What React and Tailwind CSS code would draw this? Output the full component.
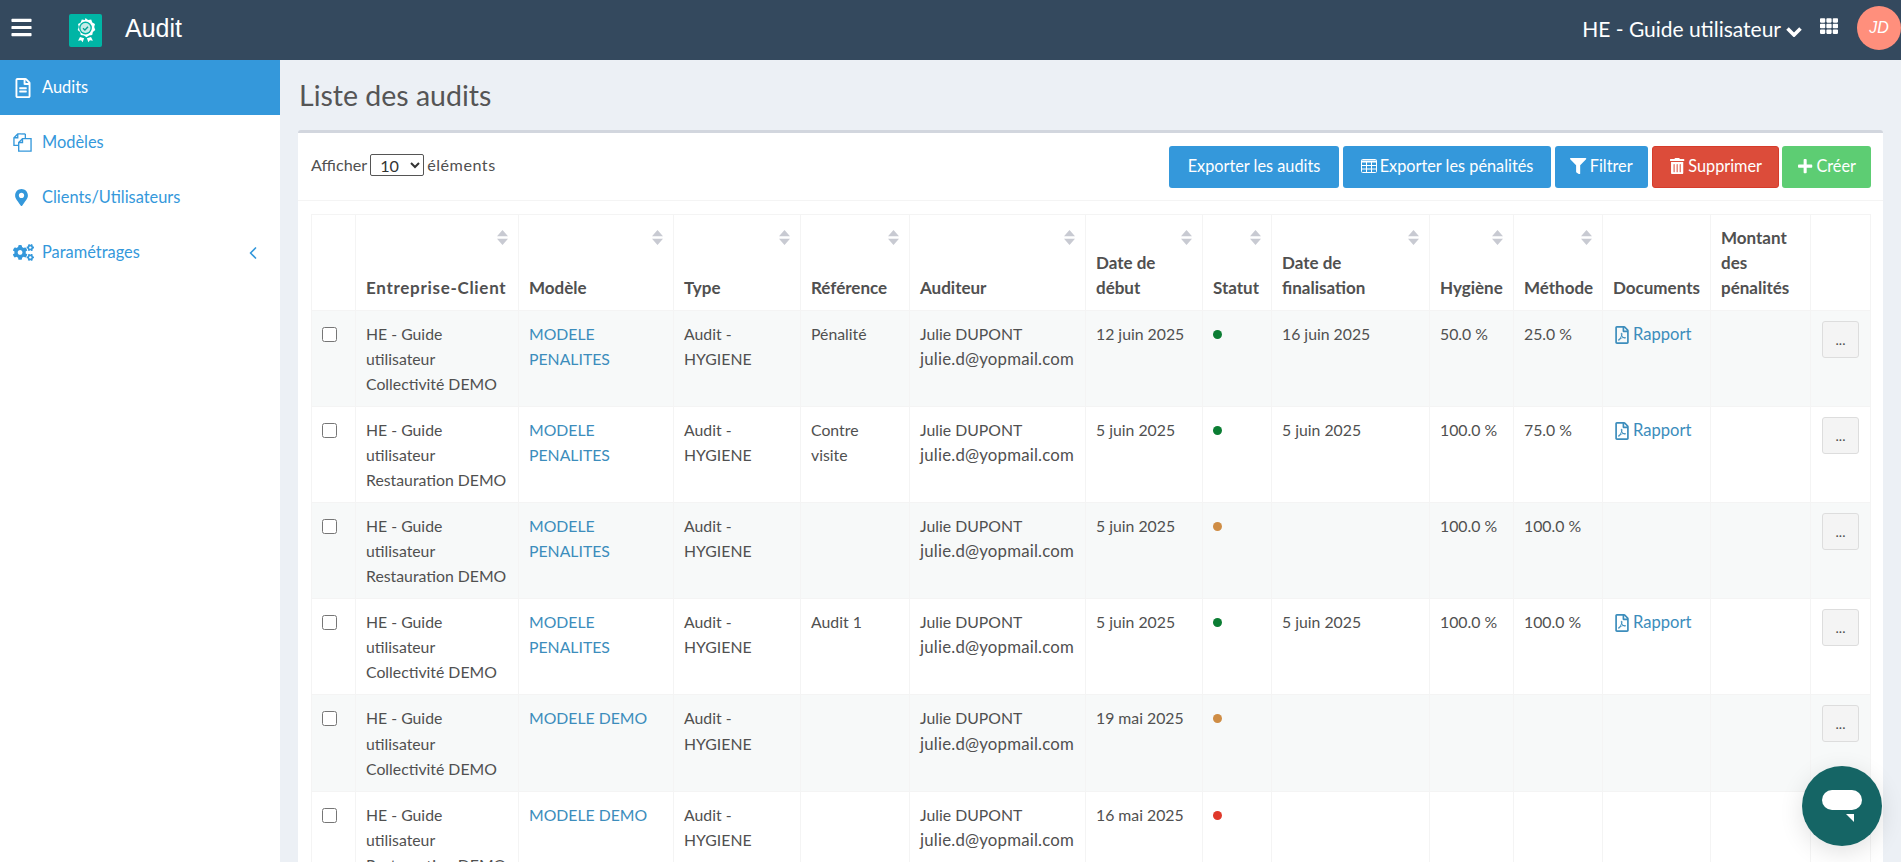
import React from 'react';
import { FaBars, FaRegFileAlt, FaMapMarkerAlt, FaCogs, FaTh, FaFilter, FaTrashAlt, FaPlus, FaRegFilePdf } from 'react-icons/fa';
import { ChevronLeft } from 'lucide-react';

const columns = [
  { w: 'w-[44px]', label: '' },
  { w: 'w-[163px] tracking-[0.7px]', label: 'Entreprise-Client', sort: true },
  { w: 'w-[155px]', label: 'Modèle', sort: true },
  { w: 'w-[127px]', label: 'Type', sort: true },
  { w: 'w-[109px]', label: 'Référence', sort: true },
  { w: 'w-[176px]', label: 'Auditeur', sort: true },
  { w: 'w-[117px]', label: 'Date de début', sort: true },
  { w: 'w-[69px]', label: 'Statut', sort: true },
  { w: 'w-[158px]', label: 'Date de finalisation', sort: true },
  { w: 'w-[84px]', label: 'Hygiène', sort: true },
  { w: 'w-[89px]', label: 'Méthode', sort: true },
  { w: 'w-[108px]', label: 'Documents' },
  { w: 'w-[100px]', label: 'Montant des pénalités' },
  { w: 'w-[60px]', label: '' },
];

const audits = [
  { client: 'Collectivité DEMO', modele: 'MODELE PENALITES', ref: 'Pénalité', debut: '12 juin 2025', statut: 'bg-[#0b7d33]', fin: '16 juin 2025', hyg: '50.0 %', met: '25.0 %', doc: true },
  { client: 'Restauration DEMO', modele: 'MODELE PENALITES', ref: <>Contre<br />visite</>, debut: '5 juin 2025', statut: 'bg-[#0b7d33]', fin: '5 juin 2025', hyg: '100.0 %', met: '75.0 %', doc: true },
  { client: 'Restauration DEMO', modele: 'MODELE PENALITES', ref: '', debut: '5 juin 2025', statut: 'bg-[#cf8d45]', fin: '', hyg: '100.0 %', met: '100.0 %', doc: false },
  { client: 'Collectivité DEMO', modele: 'MODELE PENALITES', ref: 'Audit 1', debut: '5 juin 2025', statut: 'bg-[#0b7d33]', fin: '5 juin 2025', hyg: '100.0 %', met: '100.0 %', doc: true },
  { client: 'Collectivité DEMO', modele: 'MODELE DEMO', ref: '', debut: '19 mai 2025', statut: 'bg-[#cf8d45]', fin: '', hyg: '', met: '', doc: false },
  { client: 'Restauration DEMO', modele: 'MODELE DEMO', ref: '', debut: '16 mai 2025', statut: 'bg-[#e0392b]', fin: '', hyg: '', met: '', doc: false },
];

const AuditLogo = () => (
  <svg viewBox="0 0 33 33" className="w-[33px] h-[33px]">
    <rect width="33" height="33" rx="2" fill="#00b5a5" />
    <path d="M16.5 4l2.6 1.9 3.1-.3 1.1 2.9 2.7 1.6-.8 3 1.1 2.9-2.4 2.1-.7 3-3.1.3-2.6 1.9-2.6-1.9-3.1-.3-.7-3-2.4-2.1 1.1-2.9-.8-3 2.7-1.6 1.1-2.9 3.1.3z" fill="#fff" />
    <circle cx="16.5" cy="14" r="6.4" fill="#00b5a5" />
    <circle cx="16.5" cy="14" r="5" fill="#c6ebe8" />
    <path d="M14 14.2l1.9 1.8 3.1-3.3" fill="none" stroke="#00a091" strokeWidth="1.3" />
    <path d="M11 23l-1.9 3.7 3-.5 1.5 2 1.5-3.9zM22 23l1.9 3.7-3-.5-1.5 2-1.5-3.9z" fill="#fff" />
  </svg>
);

// fa-files-o, react-icons only has the newer copy icon
const FilesIcon = () => (
  <svg viewBox="0 0 20 20" className="w-[19px] h-[19px]" fill="none" stroke="currentColor" strokeWidth="1.4">
    <path d="M8.5 1H5L1 5v8h5" />
    <path d="M5 1v4H1" />
    <path d="M13 1v5" />
    <path d="M8.5 1H13" />
    <path d="M12.5 6H10L6 10v9h13V6h-6.5z" />
    <path d="M10 6v4H6" />
  </svg>
);

// fa-table: header strip and a grid of small cells
const TableIcon = () => (
  <svg viewBox="0 0 16 14" className="w-[16px] h-[14px] shrink-0" fill="none" stroke="currentColor">
    <rect x="0.5" y="0.5" width="15" height="13" rx="1" />
    <path d="M0.5 2.5h15" strokeWidth="2" />
    <path d="M0.5 6.5h15M0.5 10h15M5.5 2v11.5M10.5 2v11.5" />
  </svg>
);

const SortArrows = () => (
  <svg viewBox="0 0 11 15" className="absolute top-[15px] right-[10px] w-[11px] h-[15px]">
    <path d="M5.5 0L11 6.2H0z M5.5 15L0 8.8h11z" fill="#c8cad2" />
  </svg>
);

const ChatBubble = () => (
  <div className="fixed top-[766px] left-[1802px] w-[80px] h-[80px] rounded-full bg-[#156565] shadow-[0_6px_24px_rgba(0,0,0,0.12)] flex items-center justify-center">
    <svg viewBox="0 0 40 32" className="w-[40px] h-[32px]">
      <rect width="40" height="20" rx="10" fill="#fff" />
      <path d="M24 24h8v8z" fill="#fff" />
    </svg>
  </div>
);

const NavItem = ({ icon, label, active, arrow }) => (
  <div className={`h-[55px] flex items-center pl-[13px] pr-[17px] text-[16.4px] ${active ? 'bg-[#3498db] text-white' : 'text-[#3498db]'}`}>
    <span className="w-[29px] flex items-center text-[20px]">{icon}</span>
    <span className="-mt-[1px]">{label}</span>
    {arrow && <ChevronLeft size={20} strokeWidth={2} className="ml-auto" />}
  </div>
);

const ActionButton = ({ className, icon, children }) => (
  <button className={`h-[42px] pb-[1px] rounded-[3px] text-white text-[16.3px] flex items-center justify-center gap-[3px] whitespace-nowrap ${className}`}>
    {icon}
    {children}
  </button>
);

const cell = 'border border-[#f4f4f4] p-[10px] align-top';

const App = () => {
  return (
    <div className="h-screen overflow-hidden bg-[#ecf0f5] text-[#505050] font-['Lato','Liberation_Sans',sans-serif]">
      <header className="h-[60px] bg-[#34495e] flex items-center text-white">
        <FaBars className="ml-[10px] w-[23px] h-[23px] -mt-[6px]" />
        <div className="ml-[36px]"><AuditLogo /></div>
        <span className="ml-[23px] -mt-[2px] text-[25px] font-['Liberation_Sans',sans-serif]">Audit</span>
        <span className="ml-auto -mt-[3px] text-[21px]">HE - Guide utilisateur</span>
        <svg viewBox="0 0 16 10" className="ml-[5px] mt-[4px] w-[16px] h-[10px]" fill="none" stroke="currentColor" strokeWidth="3.6">
          <path d="M1.5 1.5L8 8l6.5-6.5" />
        </svg>
        <FaTh className="ml-[18px] text-[18px] -mt-[8px]" />
        <div className="ml-[19px] w-[44px] h-[44px] shrink-0 -mt-[4px] rounded-full bg-[#ff8f7c] flex items-center justify-center italic text-[16px] font-['Liberation_Sans',sans-serif]">JD</div>
      </header>

      <div className="flex">
        <aside className="w-[280px] h-[802px] bg-white shrink-0">
          <NavItem active icon={<FaRegFileAlt />} label="Audits" />
          <NavItem icon={<FilesIcon />} label="Modèles" />
          <NavItem icon={<FaMapMarkerAlt className="text-[17px]" />} label="Clients/Utilisateurs" />
          <NavItem arrow icon={<FaCogs className="text-[21px]" />} label="Paramétrages" />
        </aside>

        <main className="flex-1 pl-[18px] pr-[18px]">
          <h1 className="h-[70px] flex items-center text-[28.5px] text-[#555] pl-[1px]">Liste des audits</h1>
          <section className="bg-white border-t-[3px] border-[#d2d6de] rounded-[3px]">
            <div className="h-[68px] pl-[13px] pr-[12px] flex items-center justify-between border-b border-[#f4f4f4]">
              <div className="flex items-center text-[16.2px] -mt-[2px]">
                <span>Afficher</span>
                <select className="ml-[3px] mr-[3px] w-[54px] h-[22px] border border-[#555] rounded-[2px] pl-[5px] text-[#333]" defaultValue="10">
                  <option>10</option>
                </select>
                <span className="tracking-[0.5px]">éléments</span>
              </div>
              <div className="flex gap-[4px]">
                <ActionButton className="w-[170px] bg-[#3498db]">Exporter les audits</ActionButton>
                <ActionButton className="w-[208px] bg-[#3498db]" icon={<TableIcon />}>Exporter les pénalités</ActionButton>
                <ActionButton className="w-[93px] bg-[#3498db]" icon={<FaFilter />}>Filtrer</ActionButton>
                <ActionButton className="w-[127px] bg-[#dc4c3a] border border-[#d63c2b]" icon={<FaTrashAlt />}>Supprimer</ActionButton>
                <ActionButton className="w-[89px] -ml-[1px] bg-[#5dcd73]" icon={<FaPlus />}>Créer</ActionButton>
              </div>
            </div>

            <div className="pl-[13px] pr-[12px] pt-[13px]">
              <table className="w-[1559px] table-fixed border-collapse text-[15.8px] leading-[25.03px]">
                <colgroup>
                  {columns.map((c, i) => <col key={i} className={c.w.split(' ')[0]} />)}
                </colgroup>
                <thead>
                  <tr>
                    {columns.map((c, i) => (
                      <th key={i} className={`relative border border-[#f4f4f4] p-[10px] text-left align-bottom font-bold text-[17px] ${c.w}`}>
                        {c.label}
                        {c.sort && <SortArrows />}
                      </th>
                    ))}
                  </tr>
                </thead>
                <tbody>
                  {audits.map((a, i) => (
                    <tr key={i} className={i % 2 === 0 ? 'bg-[#f7f9f9]' : ''}>
                      <td className={cell}>
                        <input type="checkbox" className="block w-[15px] h-[15px] mt-[6px]" />
                      </td>
                      <td className={cell}>HE - Guide utilisateur<br />{a.client}</td>
                      <td className={`${cell} text-[#3c8dbc]`}>{a.modele}</td>
                      <td className={cell}>Audit - HYGIENE</td>
                      <td className={cell}>{a.ref}</td>
                      <td className={cell}>Julie DUPONT<br /><span className="text-[16.8px] tracking-[0.2px]">julie.d@yopmail.com</span></td>
                      <td className={cell}>{a.debut}</td>
                      <td className={cell}>
                        <div className={`w-[9px] h-[9px] mt-[9px] rounded-full ${a.statut}`} />
                      </td>
                      <td className={cell}>{a.fin}</td>
                      <td className={cell}>{a.hyg}</td>
                      <td className={cell}>{a.met}</td>
                      <td className={`${cell} text-[#3c8dbc]`}>
                        {a.doc && <span className="inline-flex items-center gap-[2px] mt-[1px] text-[16.6px]"><FaRegFilePdf className="text-[18px]" />Rapport</span>}
                      </td>
                      <td className={cell}></td>
                      <td className={`${cell} pl-[11px]`}>
                        <button className="block w-[37px] h-[37px] bg-[#f4f4f4] border border-[#ddd] rounded-[3px] text-[14px] leading-none">...</button>
                      </td>
                    </tr>
                  ))}
                </tbody>
              </table>
            </div>
          </section>
        </main>
      </div>

      <ChatBubble />
    </div>
  );
};

export default App;
